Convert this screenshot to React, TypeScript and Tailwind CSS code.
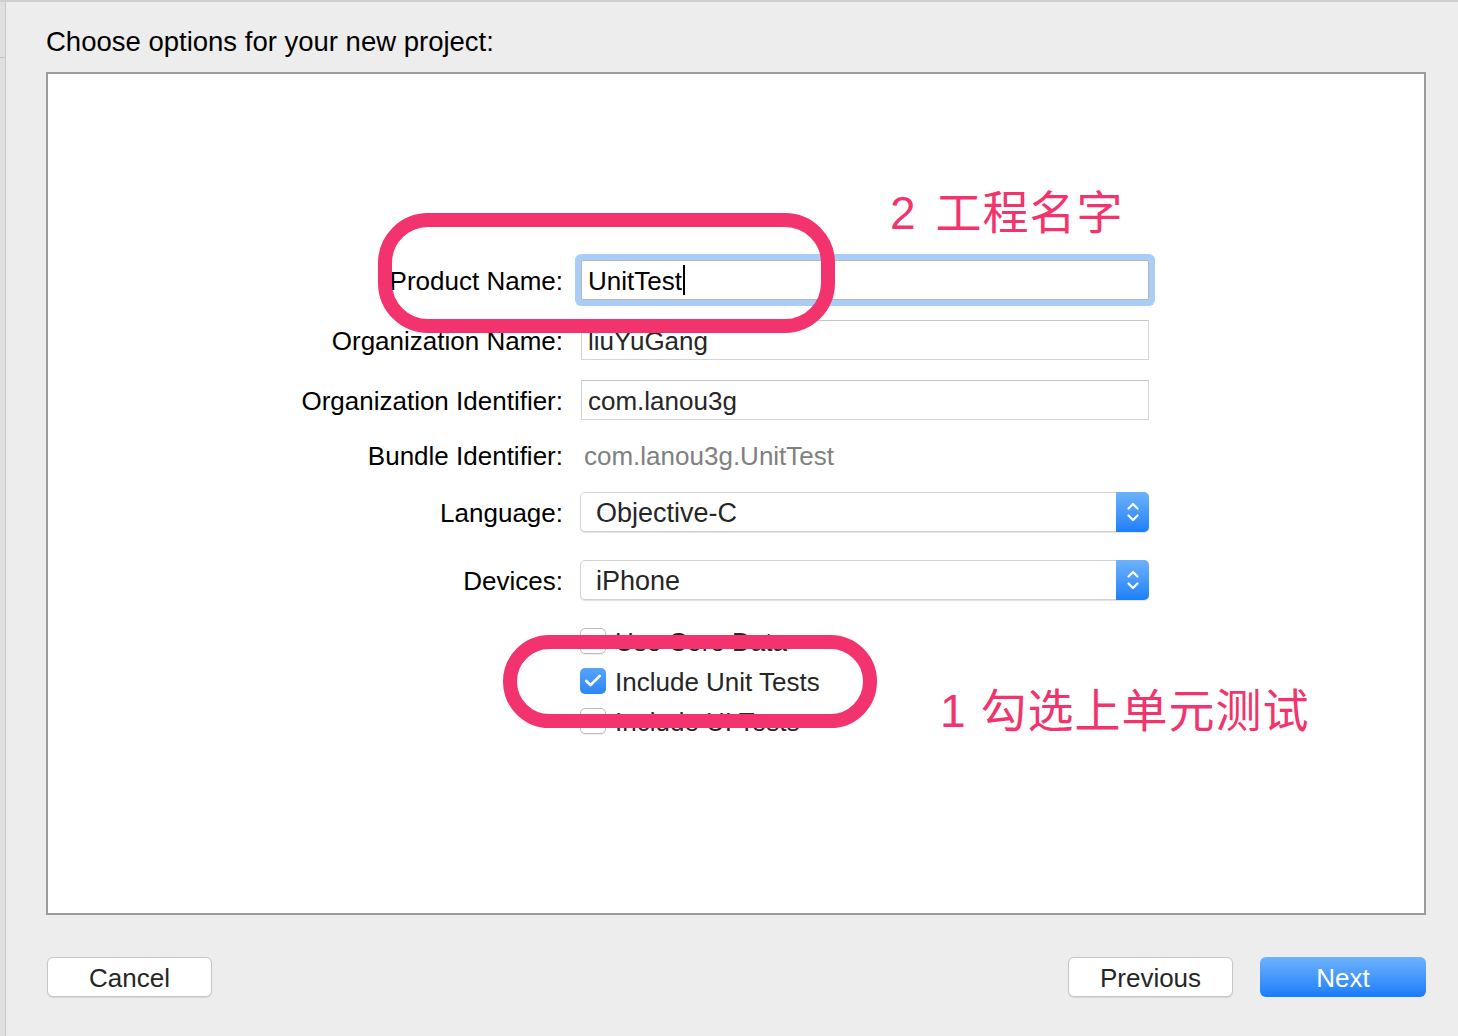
import { Check } from 'lucide-react'

const labelCls = 'w-[515px] shrink-0 pt-[3px] text-right'

function TextField({ value, focused }: { value: string; focused?: boolean }) {
  return (
    <div
      className={
        focused
          ? 'ml-[18px] flex h-[40px] w-[568px] items-center rounded-[2px] border border-[#b9b9b9] bg-white pl-[6px] pt-[3px] text-black ring-[6px] ring-[#a9cdf7]'
          : 'ml-[18px] flex h-[40px] w-[568px] items-center border border-[#d4d4d4] border-t-[#c4c4c4] bg-white pl-[6px] pt-[3px] text-[#262626]'
      }
    >
      {value}
      {focused && <span className="-mt-[3px] ml-[1px] inline-block h-[30px] w-[2px] bg-black" />}
    </div>
  )
}

function PopUp({ value }: { value: string }) {
  return (
    <div className="ml-[17px] flex h-[40px] w-[569px] items-stretch rounded-[5px] border border-[#d2d2d2] bg-white shadow-[0_1px_1px_rgba(0,0,0,0.12)]">
      <div className="flex flex-1 items-center pl-[15px] pt-[3px] text-[27px] text-[#262626]">{value}</div>
      <div className="-my-px -mr-px flex w-[33px] items-center justify-center rounded-r-[5px] bg-gradient-to-b from-[#6cb2fb] to-[#1b7ff8]">
        <svg width="14" height="26" viewBox="0 0 14 26" fill="none" stroke="white" strokeWidth="2.2" strokeLinecap="round" strokeLinejoin="round">
          <path d="M2.5 9.5 L7 5 L11.5 9.5" />
          <path d="M2.5 16.5 L7 21 L11.5 16.5" />
        </svg>
      </div>
    </div>
  )
}

function CheckRow({ label, checked }: { label: string; checked?: boolean }) {
  return (
    <div className="flex h-[40px] items-center pl-[532px]">
      {checked ? (
        <div className="flex h-[26px] w-[26px] items-center justify-center rounded-[5px] bg-gradient-to-b from-[#55a4fb] to-[#2c86f7]">
          <Check size={20} strokeWidth={3.2} color="white" />
        </div>
      ) : (
        <div className="h-[26px] w-[26px] rounded-[5px] border border-[#bdbdbd] bg-white shadow-[0_1px_1px_rgba(0,0,0,0.08)]" />
      )}
      <span className="ml-[9px] pt-[2px] text-[#262626]">{label}</span>
    </div>
  )
}

function Button({ label, primary }: { label: string; primary?: boolean }) {
  return (
    <button
      className={
        primary
          ? 'flex h-[40px] w-[166px] items-center justify-center rounded-[6px] bg-gradient-to-b from-[#6db2fc] to-[#167cf9] pt-[2px] text-white'
          : 'flex h-[40px] w-[165px] items-center justify-center rounded-[6px] border border-[#c6c6c6] bg-white pt-[2px] text-[#262626] shadow-[0_1px_1px_rgba(0,0,0,0.1)]'
      }
    >
      {label}
    </button>
  )
}

export default function App() {
  return (
    <div className="relative flex h-[1036px] w-[1458px] flex-col overflow-hidden bg-[#ededed] font-['Liberation_Sans',Arial,sans-serif] text-[26px] text-black">
      <div className="h-[2px] shrink-0 bg-[#cfcfcf]" />
      <div className="flex flex-1">
        <div className="flex w-[6px] shrink-0 flex-col border-r border-[#c9c9c9] bg-[#e0e0e0]">
          <div className="h-[56px] border-b border-[#c2c2c2]" />
        </div>
        <div className="flex flex-col pl-[40px]">
          <div className="h-[54px] pt-[26px] text-[27.5px] leading-none">Choose options for your new project:</div>

          <div className="mt-[16px] flex h-[843px] w-[1380px] flex-col border-2 border-[#9b9b9b] bg-white pt-[186px]">
            <div className="flex h-[40px] items-center">
              <div className={labelCls}>Product Name:</div>
              <TextField value="UnitTest" focused />
            </div>
            <div className="mt-[20px] flex h-[40px] items-center">
              <div className={labelCls}>Organization Name:</div>
              <TextField value="liuYuGang" />
            </div>
            <div className="mt-[20px] flex h-[40px] items-center">
              <div className={labelCls}>Organization Identifier:</div>
              <TextField value="com.lanou3g" />
            </div>
            <div className="mt-[15px] flex h-[40px] items-center">
              <div className={labelCls}>Bundle Identifier:</div>
              <div className="ml-[21px] pt-[3px] text-[#808080]">com.lanou3g.UnitTest</div>
            </div>
            <div className="mt-[17px] flex h-[40px] items-center">
              <div className={labelCls}>Language:</div>
              <PopUp value="Objective-C" />
            </div>
            <div className="mt-[28px] flex h-[40px] items-center">
              <div className={labelCls}>Devices:</div>
              <PopUp value="iPhone" />
            </div>
            <div className="mt-[21px] flex flex-col">
              <CheckRow label="Use Core Data" />
              <CheckRow label="Include Unit Tests" checked />
              <CheckRow label="Include UI Tests" />
            </div>
          </div>

          <div className="mt-[42px] flex w-[1380px] items-center">
            <div className="ml-px">
              <Button label="Cancel" />
            </div>
            <div className="ml-auto flex gap-[27px]">
              <Button label="Previous" />
              <Button label="Next" primary />
            </div>
          </div>
        </div>
      </div>

      {/* annotations */}
      <div className="absolute left-[378px] top-[213px] h-[120px] w-[457px] rounded-[50px] border-[14px] border-[#f3336d]" />
      <div className="absolute left-[503px] top-[635px] h-[93px] w-[374px] rounded-full border-[14px] border-[#f3336d]" />
      <div className="absolute left-[890px] top-[190px] flex gap-[19px] font-['Liberation_Sans','Noto_Sans_CJK_SC',sans-serif] text-[46px] leading-none tracking-[1px] text-[#f2336c]">
        <span>2</span>
        <span>工程名字</span>
      </div>
      <div className="absolute left-[940px] top-[688px] flex gap-[14px] font-['Liberation_Sans','Noto_Sans_CJK_SC',sans-serif] text-[46px] leading-none tracking-[1px] text-[#f2336c]">
        <span>1</span>
        <span>勾选上单元测试</span>
      </div>
    </div>
  )
}
